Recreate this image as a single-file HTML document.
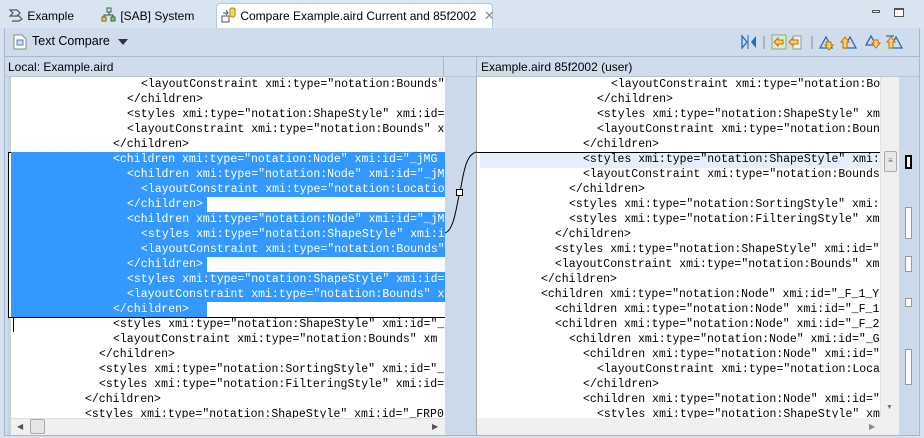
<!DOCTYPE html>
<html><head><meta charset="utf-8"><style>
*{margin:0;padding:0;box-sizing:border-box}
body{width:924px;height:438px;background:#d6e2f0;position:relative;overflow:hidden;font-family:"Liberation Sans",sans-serif;font-size:12px;color:#000}
.abs{position:absolute}
.tab{position:absolute;top:6px;height:22px;line-height:20px;font-size:12px}
.code{font-family:"Liberation Mono",monospace;font-size:11.5px;white-space:pre;line-height:15px}
.ln{position:absolute;height:15px;white-space:pre}
</style></head><body>
<!-- tab bar -->
<div class="abs" style="left:0;top:0;width:924px;height:28px;background:#d9e4f1"></div>
<div class="tab" style="left:8px">
<svg width="16" height="16" style="vertical-align:-3px" viewBox="0 0 16 16"><path d="M2 3h7l3 3-3 3H2l3-3zM4 9h7l3 3-3 2H4" fill="none" stroke="#555" stroke-width="1.2"/></svg> Example</div>
<div class="tab" style="left:101px">
<svg width="16" height="16" style="vertical-align:-3px" viewBox="0 0 16 16"><rect x="6" y="1" width="4" height="4" fill="none" stroke="#2a6a2a"/><rect x="1" y="10" width="4" height="4" fill="#e8d070" stroke="#806010"/><rect x="10" y="10" width="4" height="4" fill="#90c090" stroke="#2a6a2a"/><path d="M8 5v3M3 10V8h9v2" fill="none" stroke="#345"/></svg> [SAB] System</div>
<div class="abs" style="left:216px;top:3px;width:277px;height:26px;background:#fff;border:1px solid #b9c9dc;border-bottom:none;border-radius:4px 4px 0 0"></div>
<div class="tab" style="left:221px">
<svg width="16" height="16" style="vertical-align:-3px" viewBox="0 0 16 16"><rect x="1" y="9" width="7" height="6" fill="none" stroke="#456"/><path d="M2 6h5M5 3l2 3-2 2" fill="none" stroke="#456"/><rect x="9" y="1" width="5" height="9" rx="2" fill="#f5d860" stroke="#a08010"/></svg> Compare Example.aird Current and 85f2002 <span style="color:#888;font-size:13px;margin-left:4px">✕</span></div>
<div class="abs" style="left:872px;top:10px;width:8px;height:3px;border:1px solid #555;background:#fff"></div>
<div class="abs" style="left:894px;top:8px;width:10px;height:9px;border:1px solid #555;border-top-width:2px;background:#fff"></div>
<!-- editor frame -->
<div class="abs" style="left:4px;top:28px;width:916px;height:408px;background:#cfdcec;border:1px solid #a8b8cc;border-top:none"></div>
<!-- toolbar -->
<div class="abs" style="left:13px;top:34px"><svg width="14" height="16" viewBox="0 0 14 16"><path d="M1 1h8l4 4v10H1z" fill="#fff" stroke="#888"/><rect x="4" y="6" width="6" height="5" fill="#cde" stroke="#58a"/></svg></div>
<div class="abs" style="left:32px;top:34px;font-size:12.5px">Text Compare</div>
<div class="abs" style="left:118px;top:39px;width:0;height:0;border-left:5px solid transparent;border-right:5px solid transparent;border-top:6px solid #334"></div>
<div class="abs" style="left:740px;top:33px"><svg width="180" height="18" viewBox="0 0 180 18">
<path d="M2 3v12l5-6z" fill="none" stroke="#2a6ab0" stroke-width="1.3"/><path d="M8 2v14" stroke="#2a6ab0"/><path d="M16 3v12l-5-6z" fill="#2a6ab0"/>
<path d="M24 3v13" stroke="#888"/>
<rect x="32" y="2" width="14" height="14" fill="#d8ecd0" stroke="#8a8"/><path d="M34 9l4-4v2h5v4h-5v2z" fill="#f8d070" stroke="#c07000"/>
<rect x="53" y="3" width="8" height="13" fill="#eee" stroke="#999"/><path d="M49 9l4-4v2h5v4h-5v2z" fill="#f8d070" stroke="#c07000"/>
<path d="M72 3v13" stroke="#888"/>
<path d="M80 15l6-11 6 11z" fill="none" stroke="#2a6ab0" stroke-width="1.3"/><path d="M86 9h5v3h2l-4 5-4-5h2z" fill="#f8d070" stroke="#c07000"/>
<path d="M104 15l6-11 6 11z" fill="none" stroke="#2a6ab0" stroke-width="1.3"/><path d="M101 9h2v6h4V9h2l-4-5z" fill="#f8d070" stroke="#c07000"/>
<path d="M126 12l5-9 5 9z" fill="none" stroke="#2a6ab0" stroke-width="1.3"/><path d="M133 7h5v3h2l-4 5-4-5h2z" fill="#f8d070" stroke="#c07000"/>
<path d="M150 15l6-11 6 11z" fill="none" stroke="#2a6ab0" stroke-width="1.3"/><path d="M146 3h8" stroke="#345"/><path d="M147 9h2v6h4V9h2l-4-5z" fill="#f8d070" stroke="#c07000"/>
</svg></div>
<div class="abs" style="left:5px;top:56px;width:914px;height:1px;background:#a8b8cc"></div>
<!-- header row -->
<div class="abs" style="left:8px;top:60px;font-size:12px">Local: Example.aird</div>
<div class="abs" style="left:443px;top:57px;width:1px;height:20px;background:#a8b8cc"></div>
<div class="abs" style="left:476px;top:57px;width:1px;height:20px;background:#a8b8cc"></div>
<div class="abs" style="left:481px;top:60px;font-size:12px">Example.aird 85f2002 (user)</div>
<div class="abs" style="left:5px;top:76px;width:914px;height:1px;background:#b8c6d8"></div>
<!-- left pane -->
<div class="abs" style="left:8px;top:77px;width:437px;height:358px;background:#fff;border-left:3px solid #c8d2de"></div>
<div class="abs" style="left:8px;top:152px;width:437px;height:166px;background:#fff;border:1px solid #000"></div>
<div class="abs code" style="left:11px;top:77px;width:434px;height:341px;overflow:hidden">
<div class="ln" style="left:0;top:75px;width:434px;height:165px;background:#3399ff"></div>
<div class="ln" style="left:196px;top:120px;width:238px;background:#fff"></div>
<div class="ln" style="left:196px;top:180px;width:238px;background:#fff"></div>
<div class="ln" style="left:196px;top:225px;width:238px;background:#fff"></div>
<div class="ln" style="left:130px;top:0">&lt;layoutConstraint xmi:type="notation:Bounds" xmi:id</div>
<div class="ln" style="left:116px;top:15px">&lt;/children&gt;</div>
<div class="ln" style="left:116px;top:30px">&lt;styles xmi:type="notation:ShapeStyle" xmi:id=</div>
<div class="ln" style="left:116px;top:45px">&lt;layoutConstraint xmi:type="notation:Bounds" x</div>
<div class="ln" style="left:102px;top:60px">&lt;/children&gt;</div>
<div class="ln" style="left:102px;top:75px;color:#fff">&lt;children xmi:type="notation:Node" xmi:id="_jMG</div>
<div class="ln" style="left:116px;top:90px;color:#fff">&lt;children xmi:type="notation:Node" xmi:id="_jM</div>
<div class="ln" style="left:130px;top:105px;color:#fff">&lt;layoutConstraint xmi:type="notation:Location"</div>
<div class="ln" style="left:116px;top:120px;color:#fff">&lt;/children&gt;</div>
<div class="ln" style="left:116px;top:135px;color:#fff">&lt;children xmi:type="notation:Node" xmi:id="_jM</div>
<div class="ln" style="left:130px;top:150px;color:#fff">&lt;styles xmi:type="notation:ShapeStyle" xmi:id</div>
<div class="ln" style="left:130px;top:165px;color:#fff">&lt;layoutConstraint xmi:type="notation:Bounds"</div>
<div class="ln" style="left:116px;top:180px;color:#fff">&lt;/children&gt;</div>
<div class="ln" style="left:116px;top:195px;color:#fff">&lt;styles xmi:type="notation:ShapeStyle" xmi:id=</div>
<div class="ln" style="left:116px;top:210px;color:#fff">&lt;layoutConstraint xmi:type="notation:Bounds" x</div>
<div class="ln" style="left:102px;top:225px;color:#fff">&lt;/children&gt;</div>
<div class="ln" style="left:102px;top:240px">&lt;styles xmi:type="notation:ShapeStyle" xmi:id="_</div>
<div class="ln" style="left:102px;top:255px">&lt;layoutConstraint xmi:type="notation:Bounds" xm</div>
<div class="ln" style="left:88px;top:270px">&lt;/children&gt;</div>
<div class="ln" style="left:88px;top:285px">&lt;styles xmi:type="notation:SortingStyle" xmi:id="_</div>
<div class="ln" style="left:88px;top:300px">&lt;styles xmi:type="notation:FilteringStyle" xmi:id=</div>
<div class="ln" style="left:74px;top:315px">&lt;/children&gt;</div>
<div class="ln" style="left:74px;top:330px">&lt;styles xmi:type="notation:ShapeStyle" xmi:id="_FRP0</div>
</div>
<div class="abs" style="left:13px;top:318px;width:1px;height:14px;background:#000"></div>
<!-- left h scrollbar -->
<div class="abs" style="left:11px;top:418px;width:434px;height:17px;background:#f0f0f0;border-top:1px solid #e0e0e0"></div>
<div class="abs" style="left:30px;top:419px;width:15px;height:15px;background:#e6e6e6;border:1px solid #aaa;border-radius:2px"></div>
<div class="abs" style="left:17px;top:422px;font-size:8px;color:#555">◀</div>
<div class="abs" style="left:432px;top:422px;font-size:8px;color:#555">▶</div>
<!-- gutter -->
<div class="abs" style="left:445px;top:77px;width:32px;height:358px;background:#cbd9ea"></div>
<div class="abs" style="left:476px;top:77px;width:1px;height:358px;background:#aaa"></div>
<svg class="abs" style="left:445px;top:140px" width="35" height="100" viewBox="0 0 35 100"><path d="M0 93C10 90 12 60 15 52C18 38 20 12 33 12" fill="none" stroke="#000"/><rect x="11.5" y="49.5" width="6" height="6" fill="#fff" stroke="#000"/></svg>
<!-- right pane -->
<div class="abs" style="left:477px;top:77px;width:441px;height:358px;background:#fff"></div>
<div class="abs" style="left:480px;top:153px;width:407px;height:15px;background:#e5eefa"></div>
<div class="abs" style="left:477px;top:152px;width:410px;height:1px;background:#000"></div>
<div class="abs code" style="left:480px;top:77px;width:400px;height:341px;overflow:hidden">
<div class="ln" style="left:131px;top:0">&lt;layoutConstraint xmi:type="notation:Bo</div>
<div class="ln" style="left:117px;top:15px">&lt;/children&gt;</div>
<div class="ln" style="left:117px;top:30px">&lt;styles xmi:type="notation:ShapeStyle" xmi</div>
<div class="ln" style="left:117px;top:45px">&lt;layoutConstraint xmi:type="notation:Boun</div>
<div class="ln" style="left:103px;top:60px">&lt;/children&gt;</div>
<div class="ln" style="left:103px;top:75px">&lt;styles xmi:type="notation:ShapeStyle" xmi:</div>
<div class="ln" style="left:103px;top:90px">&lt;layoutConstraint xmi:type="notation:Bounds</div>
<div class="ln" style="left:89px;top:105px">&lt;/children&gt;</div>
<div class="ln" style="left:89px;top:120px">&lt;styles xmi:type="notation:SortingStyle" xmi:</div>
<div class="ln" style="left:89px;top:135px">&lt;styles xmi:type="notation:FilteringStyle" xm</div>
<div class="ln" style="left:75px;top:150px">&lt;/children&gt;</div>
<div class="ln" style="left:75px;top:165px">&lt;styles xmi:type="notation:ShapeStyle" xmi:id="</div>
<div class="ln" style="left:75px;top:180px">&lt;layoutConstraint xmi:type="notation:Bounds" xm</div>
<div class="ln" style="left:61px;top:195px">&lt;/children&gt;</div>
<div class="ln" style="left:61px;top:210px">&lt;children xmi:type="notation:Node" xmi:id="_F_1_Y</div>
<div class="ln" style="left:75px;top:225px">&lt;children xmi:type="notation:Node" xmi:id="_F_1</div>
<div class="ln" style="left:75px;top:240px">&lt;children xmi:type="notation:Node" xmi:id="_F_2</div>
<div class="ln" style="left:89px;top:255px">&lt;children xmi:type="notation:Node" xmi:id="_G</div>
<div class="ln" style="left:103px;top:270px">&lt;children xmi:type="notation:Node" xmi:id="</div>
<div class="ln" style="left:117px;top:285px">&lt;layoutConstraint xmi:type="notation:Loca</div>
<div class="ln" style="left:103px;top:300px">&lt;/children&gt;</div>
<div class="ln" style="left:103px;top:315px">&lt;children xmi:type="notation:Node" xmi:id="</div>
<div class="ln" style="left:117px;top:330px">&lt;styles xmi:type="notation:ShapeStyle" xm</div>
</div>
<!-- right v scrollbar -->
<div class="abs" style="left:880px;top:77px;width:19px;height:341px;background:#f0f0f0;border-left:1px solid #e3e3e3"></div>
<div class="abs" style="left:884px;top:151px;width:13px;height:21px;background:#e8e8e8;border:1px solid #aaa;border-radius:2px;font-size:8px;line-height:18px;text-align:center;color:#666">≡</div>
<div class="abs" style="left:886px;top:404px;font-size:7px;color:#777">▼</div>
<div class="abs" style="left:477px;top:418px;width:422px;height:17px;background:#f0f0f0"></div>
<div class="abs" style="left:869px;top:422px;font-size:8px;color:#888">▶</div>
<!-- overview ruler -->
<div class="abs" style="left:899px;top:77px;width:19px;height:358px;background:#cbd9ea"></div>
<div class="abs" style="left:905px;top:155px;width:7px;height:14px;background:#fff;border:2px solid #000"></div>
<div class="abs" style="left:905px;top:207px;width:7px;height:32px;background:#fff;border:1px solid #999"></div>
<div class="abs" style="left:905px;top:256px;width:7px;height:16px;background:#fff;border:1px solid #999"></div>
<div class="abs" style="left:905px;top:298px;width:7px;height:9px;background:#fff;border:1px solid #999"></div>
<div class="abs" style="left:905px;top:349px;width:7px;height:36px;background:#fff;border:1px solid #999"></div>
</body></html>
